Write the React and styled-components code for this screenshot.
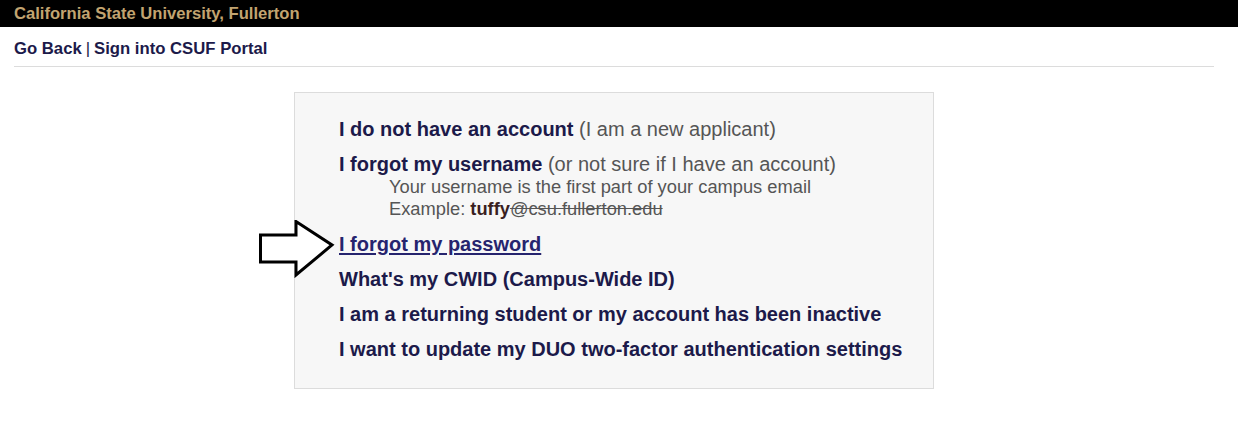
import React from "react";
import styled, { createGlobalStyle } from "styled-components";

const Global = createGlobalStyle`
  html, body { margin: 0; padding: 0; background: #fff; }
  body { font-family: "Liberation Sans", Arial, sans-serif; }
`;

const TopBar = styled.div`
  background: #000;
  height: 27px;
  padding: 0 14px;
  display: flex;
  align-items: center;
`;

const Brand = styled.span`
  color: #c2a470;
  font-weight: bold;
  font-size: 16.6px;
`;

const Page = styled.div`
  margin: 0 24px 0 14px;
`;

const Nav = styled.nav`
  padding: 12px 0 8px;
  border-bottom: 1px solid #dcdcdc;
  font-size: 16.7px;
  line-height: 19px;
  font-weight: bold;
  color: #1c1a4a;
`;

const NavLink = styled.a`
  color: #1c1a4a;
  text-decoration: none;
`;

const Sep = styled.span`
  font-weight: normal;
  margin: 0 4px;
`;

const Stage = styled.div`
  display: flex;
  justify-content: center;
  padding-top: 25px;
`;

const Wrap = styled.div`
  position: relative;
`;

const Box = styled.div`
  width: 594px;
  height: 270px;
  background: #f7f7f7;
  border: 1px solid #dcdcdc;
  padding: 25px 0 0 44px;
`;

const List = styled.ul`
  list-style: none;
  margin: 0;
  padding: 0;
  display: flex;
  flex-direction: column;
  gap: 13px;
`;

const Item = styled.li`
  font-size: 20px;
  line-height: 22px;
  white-space: nowrap;
`;

const Main = styled.a`
  font-weight: bold;
  color: ${(p) => (p.$active ? "#26246e" : "#1c1a4a")};
  text-decoration: ${(p) => (p.$active ? "underline" : "none")};
  text-underline-offset: 2px;
`;

const Note = styled.span`
  color: #555;
`;

const Sub = styled.div`
  margin: 1px 0 0 50px;
  font-size: 18.3px;
  line-height: 22px;
  color: #555;
`;

const Tuffy = styled.b`
  color: #3a1f1f;
`;

const Strike = styled.span`
  text-decoration: line-through;
`;

const Arrow = styled.svg`
  position: absolute;
  left: -35px;
  top: 128px;
`;

export default function App() {
  return (
    <>
      <Global />
      <TopBar>
        <Brand>California State University, Fullerton</Brand>
      </TopBar>
      <Page>
        <Nav>
          <NavLink href="#">Go Back</NavLink>
          <Sep>|</Sep>
          <NavLink href="#">Sign into CSUF Portal</NavLink>
        </Nav>
        <Stage>
          <Wrap>
            <Arrow width="76" height="58" viewBox="0 0 76 58">
              <polygon
                points="1.5,15 37,15 37,1.5 73,25 37,55 37,42 1.5,42"
                fill="#fff"
                stroke="#000"
                strokeWidth="3"
                strokeLinejoin="miter"
              />
            </Arrow>
            <Box>
              <List>
                <Item>
                  <Main href="#">I do not have an account</Main>{" "}
                  <Note>(I am a new applicant)</Note>
                </Item>
                <Item>
                  <Main href="#">I forgot my username</Main>{" "}
                  <Note>(or not sure if I have an account)</Note>
                  <Sub>
                    Your username is the first part of your campus email
                    <br />
                    Example: <Tuffy>tuffy</Tuffy>
                    <Strike>@csu.fullerton.edu</Strike>
                  </Sub>
                </Item>
                <Item>
                  <Main href="#" $active>
                    I forgot my password
                  </Main>
                </Item>
                <Item>
                  <Main href="#">What's my CWID (Campus-Wide ID)</Main>
                </Item>
                <Item>
                  <Main href="#">I am a returning student or my account has been inactive</Main>
                </Item>
                <Item>
                  <Main href="#">I want to update my DUO two-factor authentication settings</Main>
                </Item>
              </List>
            </Box>
          </Wrap>
        </Stage>
      </Page>
    </>
  );
}
